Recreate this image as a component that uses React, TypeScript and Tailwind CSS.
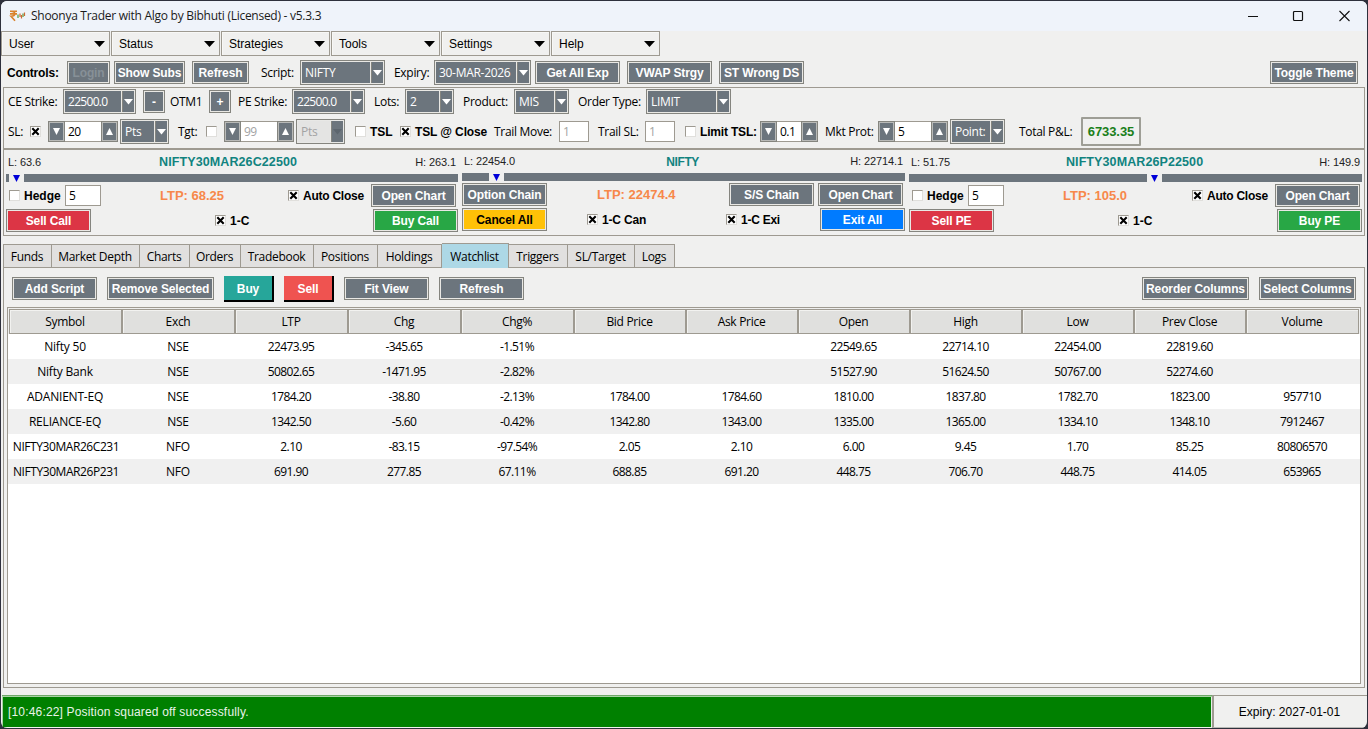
import clsx from 'clsx';
import type { ReactNode } from 'react';

interface IBaseProps {
    className?: string;
    children?: ReactNode;
}

const Label = ({ className, children }: IBaseProps) => (
    <span className={clsx('shrink-0 whitespace-nowrap tracking-[-0.3px]', className)}>{children}</span>
);

const BoldLabel = ({ className, children }: IBaseProps) => (
    <span className={clsx("shrink-0 whitespace-nowrap font-['Liberation_Sans',sans-serif] font-bold", className)}>
        {children}
    </span>
);

const Button = ({ className, children, raised }: IBaseProps & { raised?: boolean }) => (
    <button
        className={clsx(
            "flex shrink-0 items-center justify-center overflow-hidden font-['Liberation_Sans',sans-serif] font-bold tracking-[-0.12px] whitespace-nowrap",
            raised
                ? 'h-[26px] border-r-2 border-b-2 border-black pt-[2px]'
                : 'h-[23px] border border-[#85857f] shadow-[inset_0_0_0_1px_#e9e8e4]',
            className,
        )}
    >
        {children}
    </button>
);

const Arrow = ({ className, up, wide }: { className?: string; up?: boolean; wide?: boolean }) => (
    <svg
        className={clsx('shrink-0', className)}
        width={wide ? 11 : 7}
        height={wide ? 6 : 7}
        viewBox="0 0 10 10"
        preserveAspectRatio="none"
        fill="currentColor"
    >
        <path d={up ? 'M0 10 5 0 10 10z' : 'M0 0 10 0 5 10z'} />
    </svg>
);

const Combo = ({ className, children, disabled }: { className?: string; children: string; disabled?: boolean }) => (
    <div
        className={clsx(
            'flex h-[25px] shrink-0 border border-[#85857f] p-px',
            disabled ? 'bg-[#e8e8e6] text-[#a3a3a3]' : 'bg-[#e9e8e4] text-white',
            className,
        )}
    >
        <span
            className={clsx(
                'flex min-w-0 grow items-center overflow-hidden pl-[3px] whitespace-nowrap',
                disabled ? 'bg-[#e4e4e3]' : 'bg-[#6c757d]',
                /^\d+\./.test(children) ? 'tracking-[-0.7px]' : 'tracking-[-0.3px]',
            )}
        >
            {children}
        </span>
        <span
            className={clsx(
                'ml-px flex w-[12px] shrink-0 items-center justify-center border-l border-[#85857f] bg-[#6c757d]',
                disabled && 'text-[#5d666e]',
            )}
        >
            <svg width="9" height="6" viewBox="0 0 9 6" fill="currentColor">
                <path d="M0 0h9L4.5 5.5z" />
            </svg>
        </span>
    </div>
);

const Spinner = ({ className, children, disabled }: IBaseProps & { disabled?: boolean }) => (
    <div className={clsx('flex h-[21px] shrink-0', className)}>
        <span className="flex w-[17px] shrink-0 items-center justify-center border border-[#85857f] bg-[#6c757d] text-white shadow-[inset_0_0_0_1px_#b9bab8]">
            <Arrow />
        </span>
        <span
            className={clsx(
                'flex min-w-0 grow items-center border-y border-[#9e9a91] bg-white pl-[3px] tracking-[-0.5px]',
                disabled && 'text-[#a3a3a3]',
            )}
        >
            {children}
        </span>
        <span className="flex w-[17px] shrink-0 items-center justify-center border border-[#85857f] bg-[#6c757d] text-white shadow-[inset_0_0_0_1px_#b9bab8]">
            <Arrow up={true} />
        </span>
    </div>
);

const Entry = ({ className, children }: IBaseProps) => (
    <span className={clsx('flex h-[21px] shrink-0 items-center border border-[#9e9a91] bg-white pl-[3px]', className)}>
        {children}
    </span>
);

const Checkbox = ({ className, checked }: { className?: string; checked?: boolean }) => (
    <span
        className={clsx(
            'flex size-[11px] shrink-0 items-center justify-center border border-t-[#9e9a91] border-r-[#e0dfdc] border-b-[#e0dfdc] border-l-[#9e9a91] bg-white',
            className,
        )}
    >
        {checked && (
            <svg width="9" height="9" viewBox="0 0 9 9" stroke="#000" strokeWidth="2.1">
                <path d="M1.3 1.3 7.7 7.7M7.7 1.3 1.3 7.7" />
            </svg>
        )}
    </span>
);

const GRAY = 'bg-[#6c757d] text-white';

const menus = ['User', 'Status', 'Strategies', 'Tools', 'Settings', 'Help'];

const TitleBar = () => (
    <div className="flex h-[30px] shrink-0 items-center bg-[#eff3fa]">
        <svg className="ml-2" width="17" height="14" viewBox="0 0 17 14" fill="none">
            <path d="M1 2.200h7M1 4.900h7M2 2.200c5 0 5 5 0 5l4 4.500" stroke="#d9822b" strokeWidth="1.6" />
            <path d="M9 9V5.500M14 8V4.500" stroke="#5da04b" strokeWidth="1.3" />
            <path d="M11 8V4.500M12.500 9.500V6M15.500 7V3.500" stroke="#cc6a35" strokeWidth="1.2" />
        </svg>
        <span className="ml-[5px] text-[12px] tracking-[-0.27px] text-[#1b1b1b]">
            Shoonya Trader with Algo by Bibhuti (Licensed) - v5.3.3
        </span>
        <svg className="mr-[17px] ml-auto" width="102" height="12" viewBox="0 0 102 12" fill="none" stroke="#111">
            <path d="M0 6.500h10" />
            <rect x="45.500" y="1.500" width="9" height="9" rx="1" strokeWidth="1.2" />
            <path d="M91.500 1l10 10M101.500 1l-10 10" strokeWidth="1.1" />
        </svg>
    </div>
);

const MenuBar = () => (
    <div className="flex h-[25px] shrink-0 gap-px">
        {menus.map((menu) => (
            <div
                key={menu}
                className="flex w-[109px] items-center justify-between border border-[#9e9a91] pr-1 pl-[7px] font-['Liberation_Sans',sans-serif] text-[12px] shadow-[inset_1px_1px_0_#f8f8f6]"
            >
                {menu}
                <Arrow wide={true} />
            </div>
        ))}
    </div>
);

const ControlsRow = () => (
    <div className="flex h-[31px] shrink-0 items-center pt-[2px] pl-[6px]">
        <BoldLabel className="w-[60px] tracking-[-0.18px]">Controls:</BoldLabel>
        <Button className="w-[43px] bg-[#6c757d] text-[#879097]">Login</Button>
        <Button className={clsx('ml-[4px] w-[71px]', GRAY)}>Show Subs</Button>
        <Button className={clsx('ml-[7px] w-[57px]', GRAY)}>Refresh</Button>
        <Label className="ml-[12px] w-[39px]">Script:</Label>
        <Combo className="w-[85px]">NIFTY</Combo>
        <Label className="ml-[9px] w-[40px]">Expiry:</Label>
        <Combo className="w-[97px]">30-MAR-2026</Combo>
        <Button className={clsx('ml-[4px] w-[85px]', GRAY)}>Get All Exp</Button>
        <Button className={clsx('ml-[7px] w-[85px]', GRAY)}>VWAP Strgy</Button>
        <Button className={clsx('ml-[7px] w-[85px]', GRAY)}>ST Wrong DS</Button>
        <Button className={clsx('mr-[9px] ml-auto w-[88px]', GRAY)}>Toggle Theme</Button>
    </div>
);

const StrikeRow = () => (
    <div className="flex h-[27px] items-center pl-[4px]">
        <Label className="w-[55px]">CE Strike:</Label>
        <Combo className="w-[73px]">22500.0</Combo>
        <Button className={clsx('ml-[7px] w-[22px]', GRAY)}>-</Button>
        <Label className="ml-[5px] w-[39px]">OTM1</Label>
        <Button className={clsx('w-[22px]', GRAY)}>+</Button>
        <Label className="ml-[7px] w-[54px]">PE Strike:</Label>
        <Combo className="w-[73px]">22500.0</Combo>
        <Label className="ml-[9px] w-[31px]">Lots:</Label>
        <Combo className="w-[49px]">2</Combo>
        <Label className="ml-[9px] w-[51px]">Product:</Label>
        <Combo className="w-[55px]">MIS</Combo>
        <Label className="ml-[9px] w-[68px]">Order Type:</Label>
        <Combo className="w-[85px]">LIMIT</Combo>
    </div>
);

const StopLossRow = () => (
    <div className="flex h-[33px] items-center pl-[4px]">
        <Label className="w-[22px]">SL:</Label>
        <Checkbox checked={true} />
        <Spinner className="ml-[7px] w-[70px]">20</Spinner>
        <Combo className="ml-[2px] w-[49px]">Pts</Combo>
        <Label className="ml-[9px] w-[28px]">Tgt:</Label>
        <Checkbox />
        <Spinner className="ml-[7px] w-[70px]" disabled={true}>
            99
        </Spinner>
        <Combo className="ml-[2px] w-[49px]" disabled={true}>
            Pts
        </Combo>
        <Checkbox className="ml-[10px]" />
        <BoldLabel className="ml-[4px] w-[30px]">TSL</BoldLabel>
        <Checkbox checked={true} />
        <BoldLabel className="ml-[4px] w-[79px] tracking-[-0.12px]">TSL @ Close</BoldLabel>
        <Label className="w-[65px]">Trail Move:</Label>
        <Entry className="w-[30px] text-[#a3a3a3]">1</Entry>
        <Label className="ml-[9px] w-[47px]">Trail SL:</Label>
        <Entry className="w-[30px] text-[#a3a3a3]">1</Entry>
        <Checkbox className="ml-[10px]" />
        <BoldLabel className="ml-[4px] w-[60px] tracking-[-0.18px]">Limit TSL:</BoldLabel>
        <Spinner className="w-[58px]">0.1</Spinner>
        <Label className="ml-[7px] w-[53px]">Mkt Prot:</Label>
        <Spinner className="w-[70px]">5</Spinner>
        <Combo className="ml-[2px] w-[55px]">Point:</Combo>
        <Label className="ml-[14px] w-[62px]">Total P&amp;L:</Label>
        <span className="flex h-[29px] w-[60px] items-center justify-center rounded-[1px] border-2 border-[#9e9e96] font-['Liberation_Sans',sans-serif] text-[13px] font-bold tracking-[-0.1px] text-[#1a7f1a]">
            6733.35
        </span>
    </div>
);

interface IPanelHeaderProps {
    low: string;
    high: string;
    title: string;
    /** Width of the bar segment before the price marker. */
    before: string;
    className?: string;
    titleClass?: string;
}

const PanelHeader = ({ low, high, title, before, className, titleClass }: IPanelHeaderProps) => (
    <>
        <div
            className={clsx(
                "flex items-center justify-between font-['Liberation_Sans',sans-serif] text-[11px] tracking-[-0.1px] text-[#222]",
                className,
            )}
        >
            <span className="pl-[2px]">{low}</span>
            <span className={clsx('font-bold text-[#11837f]', titleClass)}>{title}</span>
            <span className="pr-[2px] text-right">{high}</span>
        </div>
        <div className="flex h-[8px]">
            <span className={clsx('shrink-0 bg-[#6c757d]', before)} />
            <span className="flex w-[15px] shrink-0 items-center justify-center text-[#0000d8]">
                <Arrow />
            </span>
            <span className="grow bg-[#6c757d]" />
        </div>
    </>
);

interface IOptionPanelProps {
    header: IPanelHeaderProps;
    ltp: string;
    sell: string;
    buy: string;
    className?: string;
}

const OptionPanel = (props: IOptionPanelProps) => {
    const { header, ltp, sell, buy, className } = props;

    return (
        <div className={clsx('flex shrink-0 flex-col', className)}>
            <PanelHeader {...header} titleClass="text-[12.5px] tracking-[0.1px]" className="h-[24px]" />
            <div className="flex h-[27px] items-center pl-[3px]">
                <Checkbox />
                <BoldLabel className="ml-[4px] w-[41px]">Hedge</BoldLabel>
                <Entry className="w-[36px]">5</Entry>
                <BoldLabel className="ml-[59px] text-[13px] text-[#f7884a]">{ltp}</BoldLabel>
                <Checkbox checked={true} className="ml-auto" />
                <BoldLabel className="ml-[4px] w-[68px] tracking-[-0.25px]">Auto Close</BoldLabel>
                <Button className={clsx('mr-[2px] w-[85px]', GRAY)}>Open Chart</Button>
            </div>
            <div className="flex h-[23px] items-center">
                <Button className="w-[85px] bg-[#dc3545] text-white">{sell}</Button>
                <Checkbox checked={true} className="ml-[124px]" />
                <BoldLabel className="ml-[4px]">1-C</BoldLabel>
                <Button className="ml-auto w-[85px] bg-[#28a745] text-white">{buy}</Button>
            </div>
        </div>
    );
};

const IndexPanel = () => (
    <div className="ml-[4px] flex w-[443px] shrink-0 flex-col">
        <PanelHeader
            low="L: 22454.0"
            high="H: 22714.1"
            title="NIFTY"
            before="w-[27px]"
            titleClass="text-[12px] tracking-[-0.4px]"
            className="h-[23px]"
        />
        <div className="flex h-[27px] items-center">
            <Button className={clsx('w-[85px]', GRAY)}>Option Chain</Button>
            <BoldLabel className="ml-[50px] text-[13px] text-[#f7884a]">LTP: 22474.4</BoldLabel>
            <Button className={clsx('ml-auto w-[85px]', GRAY)}>S/S Chain</Button>
            <Button className={clsx('mr-[2px] ml-[4px] w-[85px]', GRAY)}>Open Chart</Button>
        </div>
        <div className="flex h-[23px] items-center">
            <Button className="w-[85px] bg-[#ffc107] text-black">Cancel All</Button>
            <Checkbox checked={true} className="ml-[40px]" />
            <BoldLabel className="ml-[4px] w-[124px] tracking-[-0.18px]">1-C Can</BoldLabel>
            <Checkbox checked={true} />
            <BoldLabel className="ml-[4px] tracking-[-0.25px]">1-C Exi</BoldLabel>
            <Button className="ml-auto w-[85px] bg-[#007bff] text-white">Exit All</Button>
        </div>
    </div>
);

const tabs = [
    { name: 'Funds', width: 'w-[49px]' },
    { name: 'Market Depth', width: 'w-[88px]' },
    { name: 'Charts', width: 'w-[50px]' },
    { name: 'Orders', width: 'w-[51px]' },
    { name: 'Tradebook', width: 'w-[73px]' },
    { name: 'Positions', width: 'w-[64px]' },
    { name: 'Holdings', width: 'w-[64px]' },
    { name: 'Watchlist', width: 'w-[67px]' },
    { name: 'Triggers', width: 'w-[59px]' },
    { name: 'SL/Target', width: 'w-[67px]' },
    { name: 'Logs', width: 'w-[40px]' },
];

const Tabs = () => (
    <div className="mt-[7px] ml-[2px] flex h-[24px] shrink-0 items-end">
        {tabs.map(({ name, width }) => (
            <div
                key={name}
                className={clsx(
                    'flex items-center justify-center border-t border-r border-[#9e9a91] pr-px tracking-[-0.3px] first:border-l',
                    width,
                    name === 'Watchlist' ? 'z-10 -mb-px h-[25px] bg-[#add8e6] pt-px' : 'h-[23px] bg-[#e1e0df] pt-px',
                )}
            >
                {name}
            </div>
        ))}
    </div>
);

const columns = [
    'Symbol',
    'Exch',
    'LTP',
    'Chg',
    'Chg%',
    'Bid Price',
    'Ask Price',
    'Open',
    'High',
    'Low',
    'Prev Close',
    'Volume',
];

const rows = [
    ['Nifty 50', 'NSE', '22473.95', '-345.65', '-1.51%', '', '', '22549.65', '22714.10', '22454.00', '22819.60', ''],
    ['Nifty Bank', 'NSE', '50802.65', '-1471.95', '-2.82%', '', '', '51527.90', '51624.50', '50767.00', '52274.60', ''],
    ['ADANIENT-EQ', 'NSE', '1784.20', '-38.80', '-2.13%', '1784.00', '1784.60', '1810.00', '1837.80', '1782.70', '1823.00', '957710'],
    ['RELIANCE-EQ', 'NSE', '1342.50', '-5.60', '-0.42%', '1342.80', '1343.00', '1335.00', '1365.00', '1334.10', '1348.10', '7912467'],
    ['NIFTY30MAR26C231', 'NFO', '2.10', '-83.15', '-97.54%', '2.05', '2.10', '6.00', '9.45', '1.70', '85.25', '80806570'],
    ['NIFTY30MAR26P231', 'NFO', '691.90', '277.85', '67.11%', '688.85', '691.20', '448.75', '706.70', '448.75', '414.05', '653965'],
];

const GRID = 'grid grid-cols-[repeat(5,113px)_repeat(6,112px)_113px]';

const cellTracking = (cell: string, index: number) => {
    if (index > 1) {
        return 'pl-px tracking-[-0.6px]';
    }
    return cell.length > 12 ? 'pl-[3px] tracking-[-0.43px]' : 'pl-px tracking-[-0.2px]';
};

const WatchTable = () => (
    <div className="ml-[3px] h-[377px] w-[1354px] border border-[#9e9a91] bg-white">
        <div className={clsx(GRID, 'h-[26px] bg-[#efefee] pt-px pl-px')}>
            {columns.map((column) => (
                <div
                    key={column}
                    className="flex items-center justify-center border border-[#9e9a91] bg-[#e0e0de] pr-px tracking-[-0.3px] shadow-[inset_1px_1px_0_#f2f2f0]"
                >
                    {column}
                </div>
            ))}
        </div>
        {rows.map((row) => (
            <div key={row[0]} className={clsx(GRID, 'h-[25px] even:bg-white odd:bg-[#f0f0f0]')}>
                {row.map((cell, index) => (
                    <div
                        key={columns[index]}
                        className={clsx(
                            'flex items-center justify-center whitespace-nowrap',
                            cellTracking(cell, index),
                        )}
                    >
                        {cell}
                    </div>
                ))}
            </div>
        ))}
    </div>
);

const Toolbar = () => (
    <div className="flex h-[39px] items-center pt-[2px] pl-[8px]">
        <Button className={clsx('w-[85px]', GRAY)}>Add Script</Button>
        <Button className={clsx('ml-[10px] w-[107px]', GRAY)}>Remove Selected</Button>
        <Button raised={true} className="ml-[10px] w-[50px] bg-[#26a69a] text-white">
            Buy
        </Button>
        <Button raised={true} className="ml-[10px] w-[50px] bg-[#ef5350] text-white">
            Sell
        </Button>
        <Button className={clsx('ml-[10px] w-[85px]', GRAY)}>Fit View</Button>
        <Button className={clsx('ml-[10px] w-[85px]', GRAY)}>Refresh</Button>
        <Button className={clsx('ml-auto w-[107px]', GRAY)}>Reorder Columns</Button>
        <Button className={clsx('mr-[8px] ml-[10px] w-[97px]', GRAY)}>Select Columns</Button>
    </div>
);

const StatusBar = () => (
    <div className="mt-[7px] flex h-[33px] shrink-0 font-['Liberation_Sans',sans-serif] text-[12px]">
        <div className="ml-px flex w-[1210px] items-center border-t border-[#6fa86a] bg-[#008000] pl-[6px] tracking-[0.17px] text-[#e8f3e8] shadow-[inset_0_1px_0_#a9d3a5,inset_0_-1px_0_#eef5ee,inset_1px_0_0_#a9d3a5,inset_-1px_0_0_#e6efe6]">
            [10:46:22] Position squared off successfully.
        </div>
        <div className="flex grow items-center justify-center border-t border-b border-l-2 border-[#9e9a91] border-b-[#b8b8b4] pr-[2px]">
            Expiry: 2027-01-01
        </div>
    </div>
);

export default function App() {
    return (
        <div className="h-[729px] w-[1368px] overflow-hidden bg-[#2e303c] p-px font-['Open_Sans','Noto_Sans',sans-serif] text-[12px] leading-none text-black">
            <div className="flex h-[727px] w-[1366px] flex-col overflow-hidden rounded-[6px] bg-[#f0f0ef]">
                <TitleBar />
                <MenuBar />
                <ControlsRow />
                <div className="mr-[2px] ml-[2px] h-[62px] shrink-0 border border-[#9e9a91]">
                    <StrikeRow />
                    <StopLossRow />
                </div>
                <div className="mr-[2px] ml-[2px] flex h-[87px] shrink-0 border border-[#9e9a91]">
                    <OptionPanel
                        header={{
                            low: 'L: 63.6',
                            high: 'H: 263.1',
                            title: 'NIFTY30MAR26C22500',
                            before: 'w-[3px]',
                        }}
                        ltp="LTP: 68.25"
                        sell="Sell Call"
                        buy="Buy Call"
                        className="ml-[2px] w-[452px]"
                    />
                    <IndexPanel />
                    <OptionPanel
                        header={{
                            low: 'L: 51.75',
                            high: 'H: 149.9',
                            title: 'NIFTY30MAR26P22500',
                            before: 'w-[238px]',
                        }}
                        ltp="LTP: 105.0"
                        sell="Sell PE"
                        buy="Buy PE"
                        className="ml-[4px] w-[453px]"
                    />
                </div>
                <Tabs />
                <div className="mr-[2px] ml-[2px] h-[421px] shrink-0 border border-[#9e9a91]">
                    <Toolbar />
                    <WatchTable />
                </div>
                <StatusBar />
            </div>
        </div>
    );
}
